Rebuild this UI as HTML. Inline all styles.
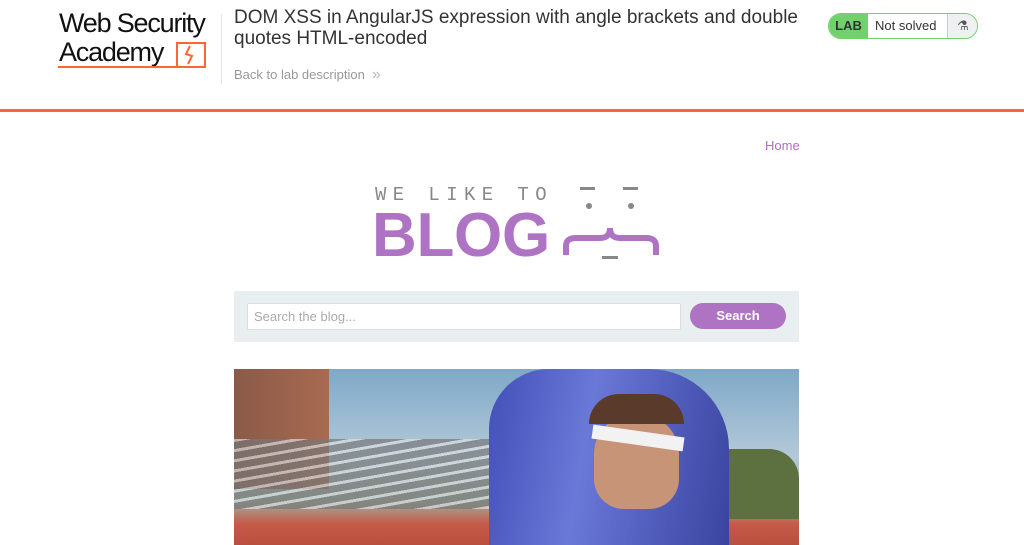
<!DOCTYPE html>
<html><head><style>
body{margin:0;width:1024px;height:545px;overflow:hidden;background:#fff;font-family:"Liberation Sans",sans-serif;position:relative}
.a{position:absolute}
</style></head><body>
<div class="a" style="left:59px;top:9px;font-size:27px;letter-spacing:-1.2px;line-height:29px;color:#111">Web Security<br>Academy</div>
<div class="a" style="left:176px;top:42px;width:26px;height:24px;border:2px solid #ff6633;border-bottom:none"></div>
<svg class="a" style="left:176px;top:42px" width="30" height="28"><path d="M14 4 L10 12 L16 14 L12 22" stroke="#ff6633" stroke-width="2" fill="none"/></svg>
<div class="a" style="left:58px;top:66px;width:148px;height:2px;background:#ff6633"></div>
<div class="a" style="left:221px;top:14px;width:1px;height:70px;background:#e6e6e6"></div>
<div class="a" style="left:234px;top:7px;font-size:19px;line-height:21px;color:#333;width:600px">DOM XSS in AngularJS expression with angle brackets and double quotes HTML-encoded</div>
<div class="a" style="left:234px;top:66px;font-size:13px;color:#999">Back to lab description &nbsp;<span style="color:#bbb;font-size:16px">»</span></div>
<div class="a" style="left:828px;top:13px;width:148px;height:24px;border:1px solid #70d16d;border-radius:13px;overflow:hidden;background:#fff">
<div class="a" style="left:0;top:0;width:39px;height:24px;background:#70d16d;font-weight:bold;font-size:13px;line-height:24px;text-align:center;color:#333">LAB</div>
<div class="a" style="left:46px;top:0;font-size:13px;line-height:24px;color:#333">Not solved</div>
<div class="a" style="left:118px;top:0;width:30px;height:24px;background:#eef0f2;border-left:1px solid #ccc;text-align:center;font-size:13px;line-height:24px;color:#555">⚗</div>
</div>
<div class="a" style="left:0;top:109px;width:1024px;height:3px;background:#ff6633"></div>
<div class="a" style="left:765px;top:138px;font-size:13px;color:#b06ec4">Home</div>
<div class="a" style="left:375px;top:184px;font-family:'Liberation Mono',monospace;font-size:19px;letter-spacing:6.4px;color:#888">WE LIKE TO</div>
<div class="a" style="left:372px;top:200px;font-size:62px;font-weight:bold;color:#ae74c3;letter-spacing:-0.3px">BLOG</div>
<svg class="a" style="left:560px;top:180px" width="105" height="85"><g fill="#888"><rect x="20" y="7" width="15" height="3"/><rect x="63" y="7" width="15" height="3"/><circle cx="29" cy="26" r="3"/><circle cx="71" cy="26" r="3"/><rect x="42" y="76" width="16" height="3"/></g><path d="M6 75 V66 Q6 58 16 58 H40 Q50 58 50 48 Q50 58 60 58 H86 Q96 58 96 66 V75" stroke="#ae74c3" stroke-width="6" fill="none"/></svg>
<div class="a" style="left:234px;top:291px;width:565px;height:51px;background:#e9eef0"></div>
<div class="a" style="left:247px;top:303px;width:432px;height:25px;background:#fff;border:1px solid #ddd;border-radius:2px;font-size:13px;line-height:25px;color:#aaa;text-indent:6px">Search the blog...</div>
<div class="a" style="left:690px;top:303px;width:96px;height:26px;background:#ae74c3;border-radius:13px;color:#fff;font-weight:bold;font-size:13px;line-height:26px;text-align:center">Search</div>
<div class="a" style="left:234px;top:369px;width:565px;height:176px;overflow:hidden;background:linear-gradient(#7fa8c8,#b3c9d8 50%,#9fb0a0 75%,#c65a48 88%,#b8503f)">
<div class="a" style="left:0;top:0;width:95px;height:120px;background:linear-gradient(90deg,#8a5a48,#a86a52)"></div>
<div class="a" style="left:0;top:70px;width:280px;height:70px;background:repeating-linear-gradient(170deg,#d8dde0 0 3px,#777 3px 10px);opacity:.7"></div>
<div class="a" style="left:440px;top:80px;width:125px;height:70px;background:#5c7040;border-radius:30px 30px 0 0"></div>
<div class="a" style="left:255px;top:0;width:240px;height:176px;background:linear-gradient(100deg,#4250b8,#6a78d8 40%,#3a44a0);border-radius:60px 80px 0 0"></div>
<div class="a" style="left:360px;top:45px;width:85px;height:95px;background:#c89478;border-radius:40px 40px 30px 30px"></div>
<div class="a" style="left:355px;top:25px;width:95px;height:30px;background:#5a3a2a;border-radius:40px 40px 0 0"></div>
<div class="a" style="left:358px;top:62px;width:92px;height:14px;background:#f2f2f2;transform:rotate(8deg)"></div>
</div>
</body></html>
